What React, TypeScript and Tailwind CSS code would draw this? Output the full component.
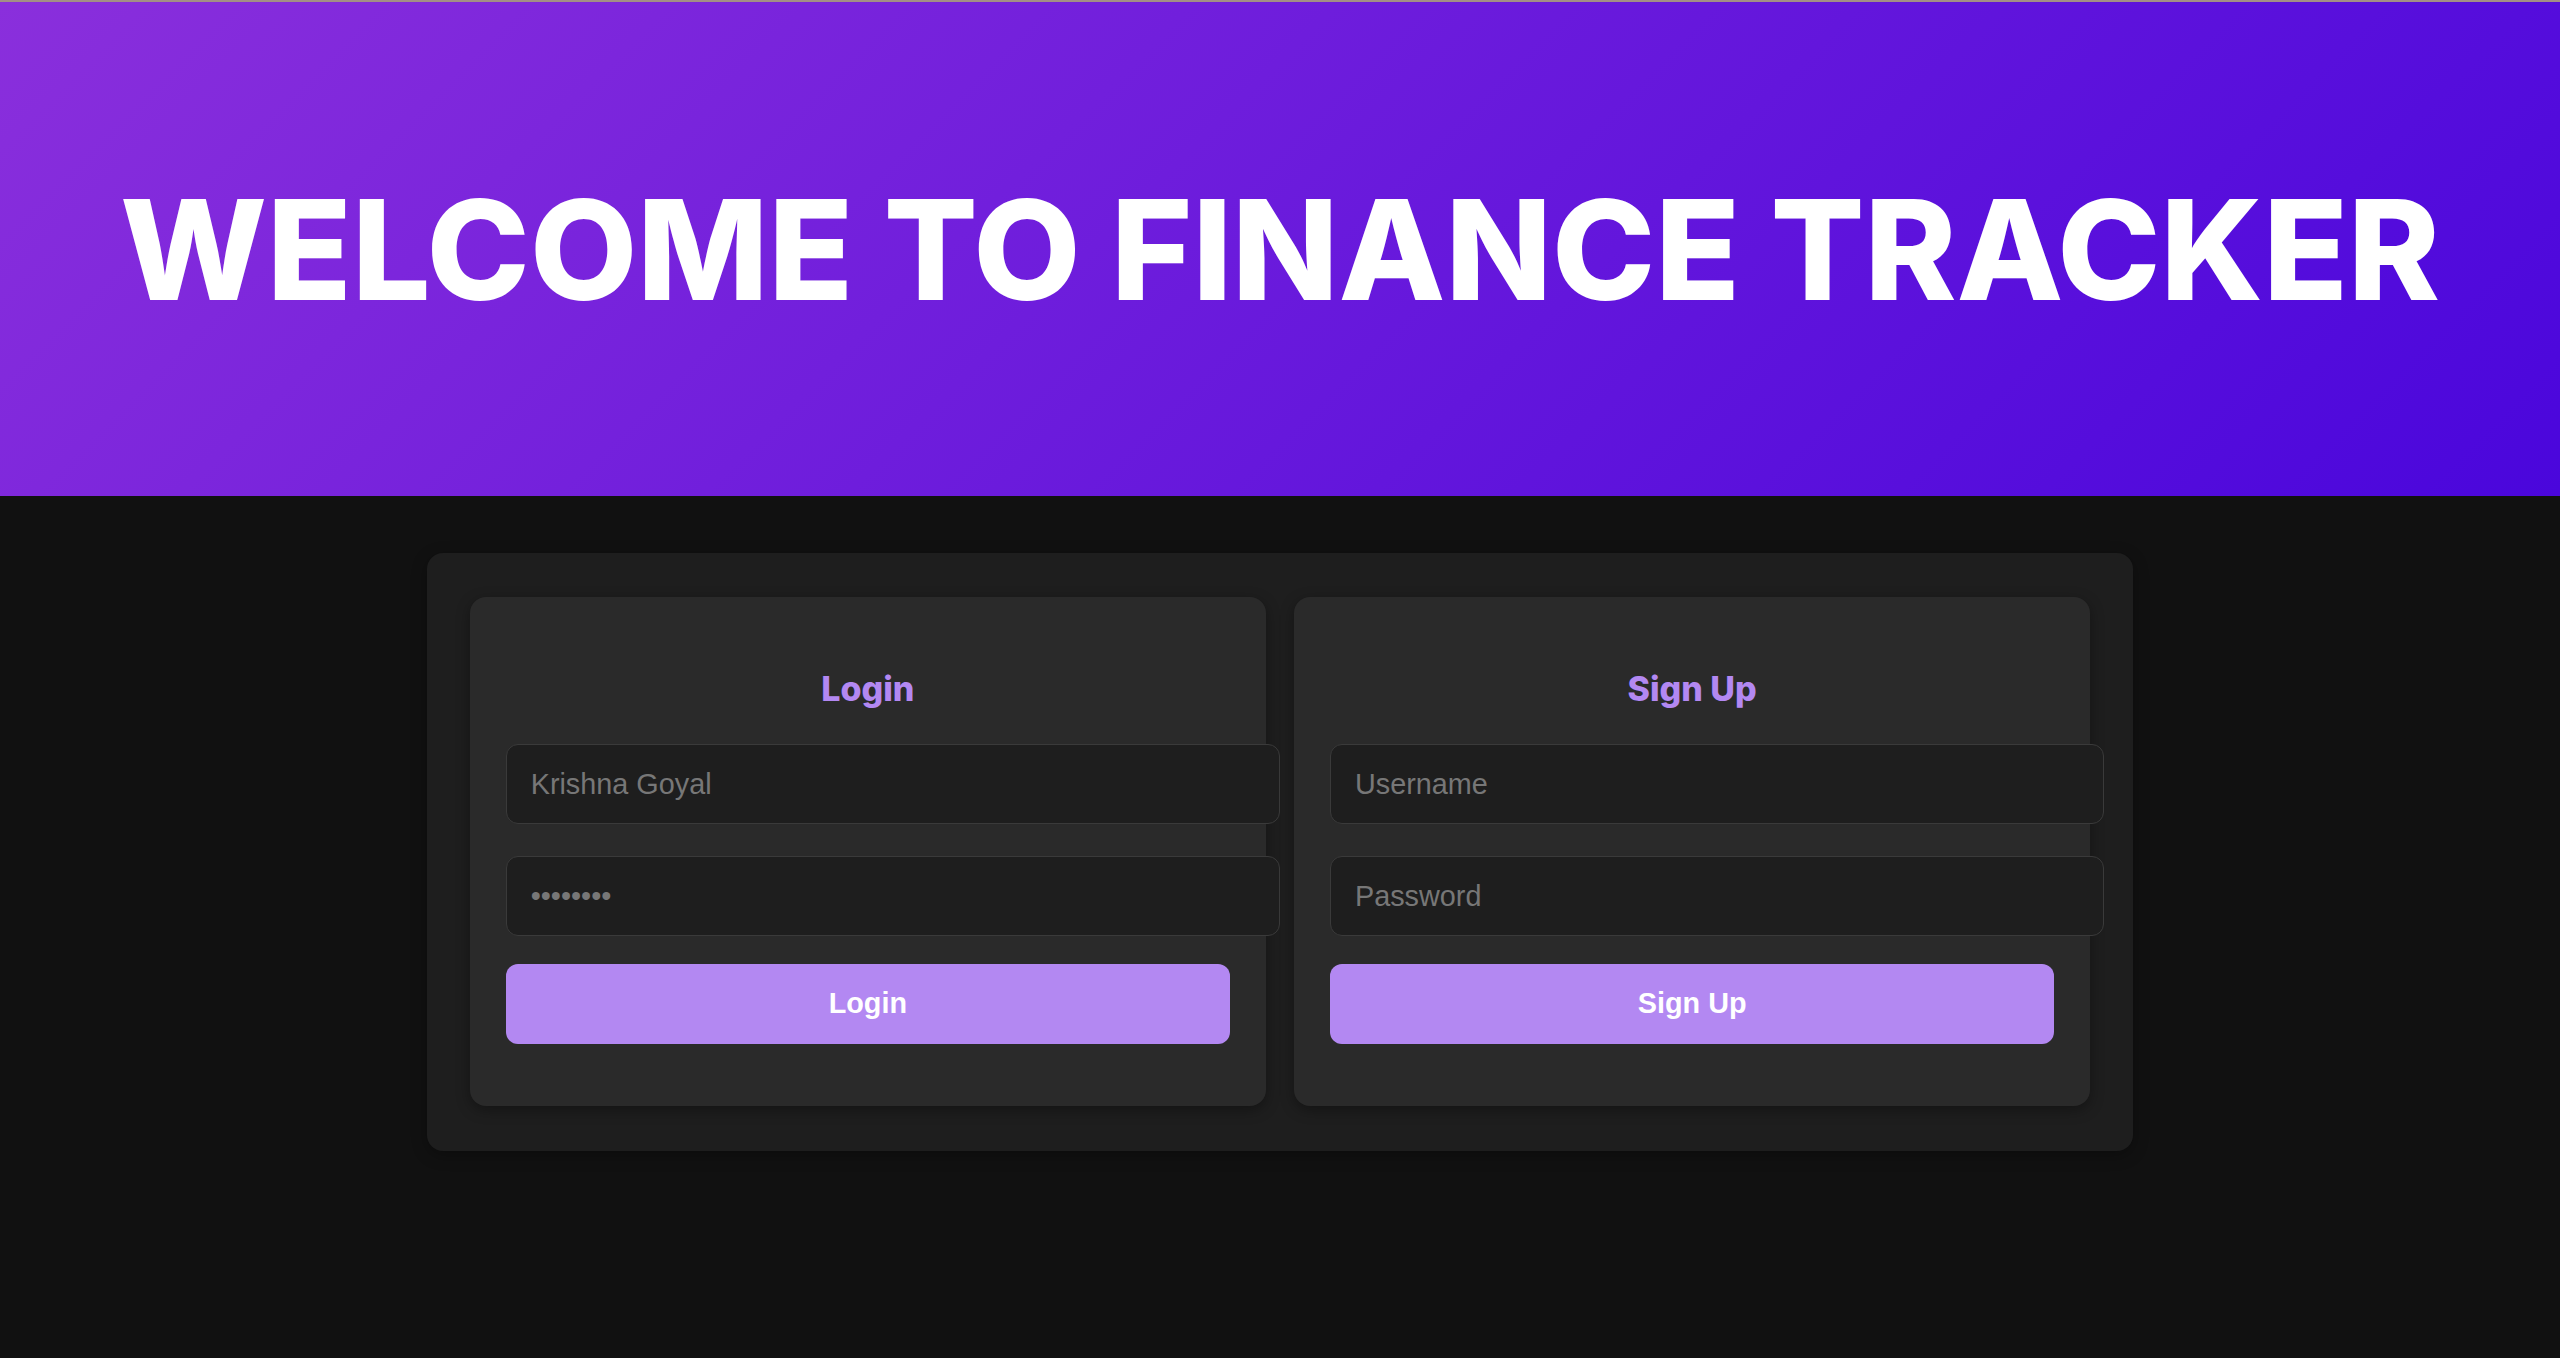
import React from "react";

function AuthCard({
  title,
  first,
  firstIsValue,
  second,
  secondIsPassword,
  button,
}: {
  title: string;
  first: string;
  firstIsValue: boolean;
  second: string;
  secondIsPassword: boolean;
  button: string;
}) {
  const inputCls =
    "box-content block w-full h-[78px] px-6 py-0 rounded-xl border border-[#3a3a3a] bg-[#1e1e1e] text-[#777777] placeholder:text-[#777777] text-[28.8px] font-['Liberation_Sans',Arial,sans-serif] outline-none";
  return (
    <div className="bg-[#2a2a2a] rounded-2xl shadow-[0_4px_14px_rgba(0,0,0,0.35)] px-[36px] pt-[68px] pb-[62px]">
      <div className="h-[48px] flex items-center justify-center">
        <h2 className="text-[#b388f2] text-[34px] leading-none font-extrabold font-['Inter',sans-serif]">
          {title}
        </h2>
      </div>
      <div className="mt-[31px]">
        {firstIsValue ? (
          <input className={inputCls} type="text" value={first} readOnly />
        ) : (
          <input className={inputCls} type="text" placeholder={first} />
        )}
      </div>
      <div className="mt-[32px]">
        {secondIsPassword ? (
          <input className={inputCls} type="password" value={second} readOnly />
        ) : (
          <input className={inputCls} type="password" placeholder={second} />
        )}
      </div>
      <button className="mt-[28px] w-full h-[80px] rounded-xl bg-[#b388f2] text-white text-[28.8px] font-bold font-['Liberation_Sans',Arial,sans-serif] flex items-center justify-center">
        {button}
      </button>
    </div>
  );
}

export default function App() {
  return (
    <div className="min-h-screen bg-[#111111]">
      <div className="h-[2px] bg-[#a38f86]" />
      <header className="h-[494px] flex items-center justify-center bg-[linear-gradient(135deg,#8a2fdc,#4a06dc)]">
        <h1 className="text-white text-[139px] leading-none font-extrabold font-['Inter',sans-serif] whitespace-nowrap">
          WELCOME TO FINANCE TRACKER
        </h1>
      </header>
      <main className="pt-[57px] pb-[200px]">
        <div className="w-2/3 mx-auto bg-[#1e1e1e] rounded-2xl shadow-[0_4px_16px_rgba(0,0,0,0.3)] px-[43px] pt-[44px] pb-[45px] grid grid-cols-2 gap-[28px]">
          <AuthCard
            title="Login"
            first="Krishna Goyal"
            firstIsValue={true}
            second="password"
            secondIsPassword={true}
            button="Login"
          />
          <AuthCard
            title="Sign Up"
            first="Username"
            firstIsValue={false}
            second="Password"
            secondIsPassword={false}
            button="Sign Up"
          />
        </div>
      </main>
    </div>
  );
}
